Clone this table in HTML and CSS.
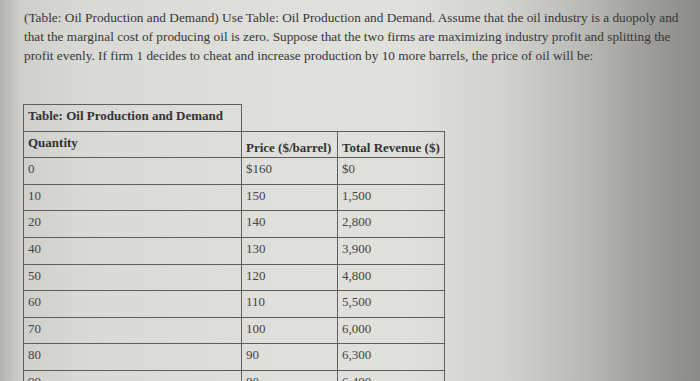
FILE: index.html
```
<!DOCTYPE html>
<html>
<head>
<meta charset="utf-8">
<link rel="stylesheet" href="styles.css">
</head>
<body>
<div class="page">
  <p class="question">(Table: Oil Production and Demand) Use Table: Oil Production and Demand. Assume that the oil industry is a duopoly and<br>that the marginal cost of producing oil is zero. Suppose that the two firms are maximizing industry profit and splitting the<br>profit evenly. If firm 1 decides to cheat and increase production by 10 more barrels, the price of oil will be:</p>
  <table class="data">
    <colgroup><col class="c1"><col class="c2"><col class="c3"></colgroup>
    <tr class="title-row"><th class="title">Table: Oil Production and Demand</th><td class="blank"></td><td class="blank"></td></tr>
    <tr class="head"><th>Quantity</th><th class="low">Price ($/barrel)</th><th class="low">Total Revenue ($)</th></tr>
    <tr><td>0</td><td>$160</td><td>$0</td></tr>
    <tr><td>10</td><td>150</td><td>1,500</td></tr>
    <tr><td>20</td><td>140</td><td>2,800</td></tr>
    <tr><td>40</td><td>130</td><td>3,900</td></tr>
    <tr><td>50</td><td>120</td><td>4,800</td></tr>
    <tr><td>60</td><td>110</td><td>5,500</td></tr>
    <tr><td>70</td><td>100</td><td>6,000</td></tr>
    <tr><td>80</td><td>90</td><td>6,300</td></tr>
    <tr><td>90</td><td>80</td><td>6,400</td></tr>
  </table>
</div>
</body>
</html>
```
FILE: styles.css
```
html, body {
  margin: 0;
  padding: 0;
  height: 381px;
  overflow: hidden;
}
body {
  background: linear-gradient(to right, #b2b2ae 0%, #cfcfcb 3%, #d9d9d5 12%, #dfdfdb 40%, #e0e0dc 58%, #d2d2ce 72%, #b8b8b4 84%, #9c9c98 93%, #8a8a88 100%);
  font-family: "Liberation Serif", "Times New Roman", serif;
  color: #363636;
}
.page {
  padding: 8px 0 0 24px;
}
.question {
  margin: 0;
  font-size: 13.3px;
  line-height: 19px;
  white-space: nowrap;
}
.data {
  margin-top: 39px;
  margin-left: -1px;
  border-collapse: collapse;
  table-layout: fixed;
  font-size: 13px;
  color: #444;
}
.c1 { width: 218px; }
.c2 { width: 96px; }
.c3 { width: 104px; }
.data tr { height: 26.6px; }
.data td, .data th {
  border: 1px solid #5e5e5e;
  text-align: left;
  vertical-align: top;
  padding: 3px 4px 0 4px;
  line-height: 16px;
  white-space: nowrap;
}
.data th {
  font-weight: bold;
  color: #333;
}
.data td.blank {
  border: none;
  border-bottom: 1px solid #5e5e5e;
}
.data th.low {
  padding-top: 8px;
}
```
